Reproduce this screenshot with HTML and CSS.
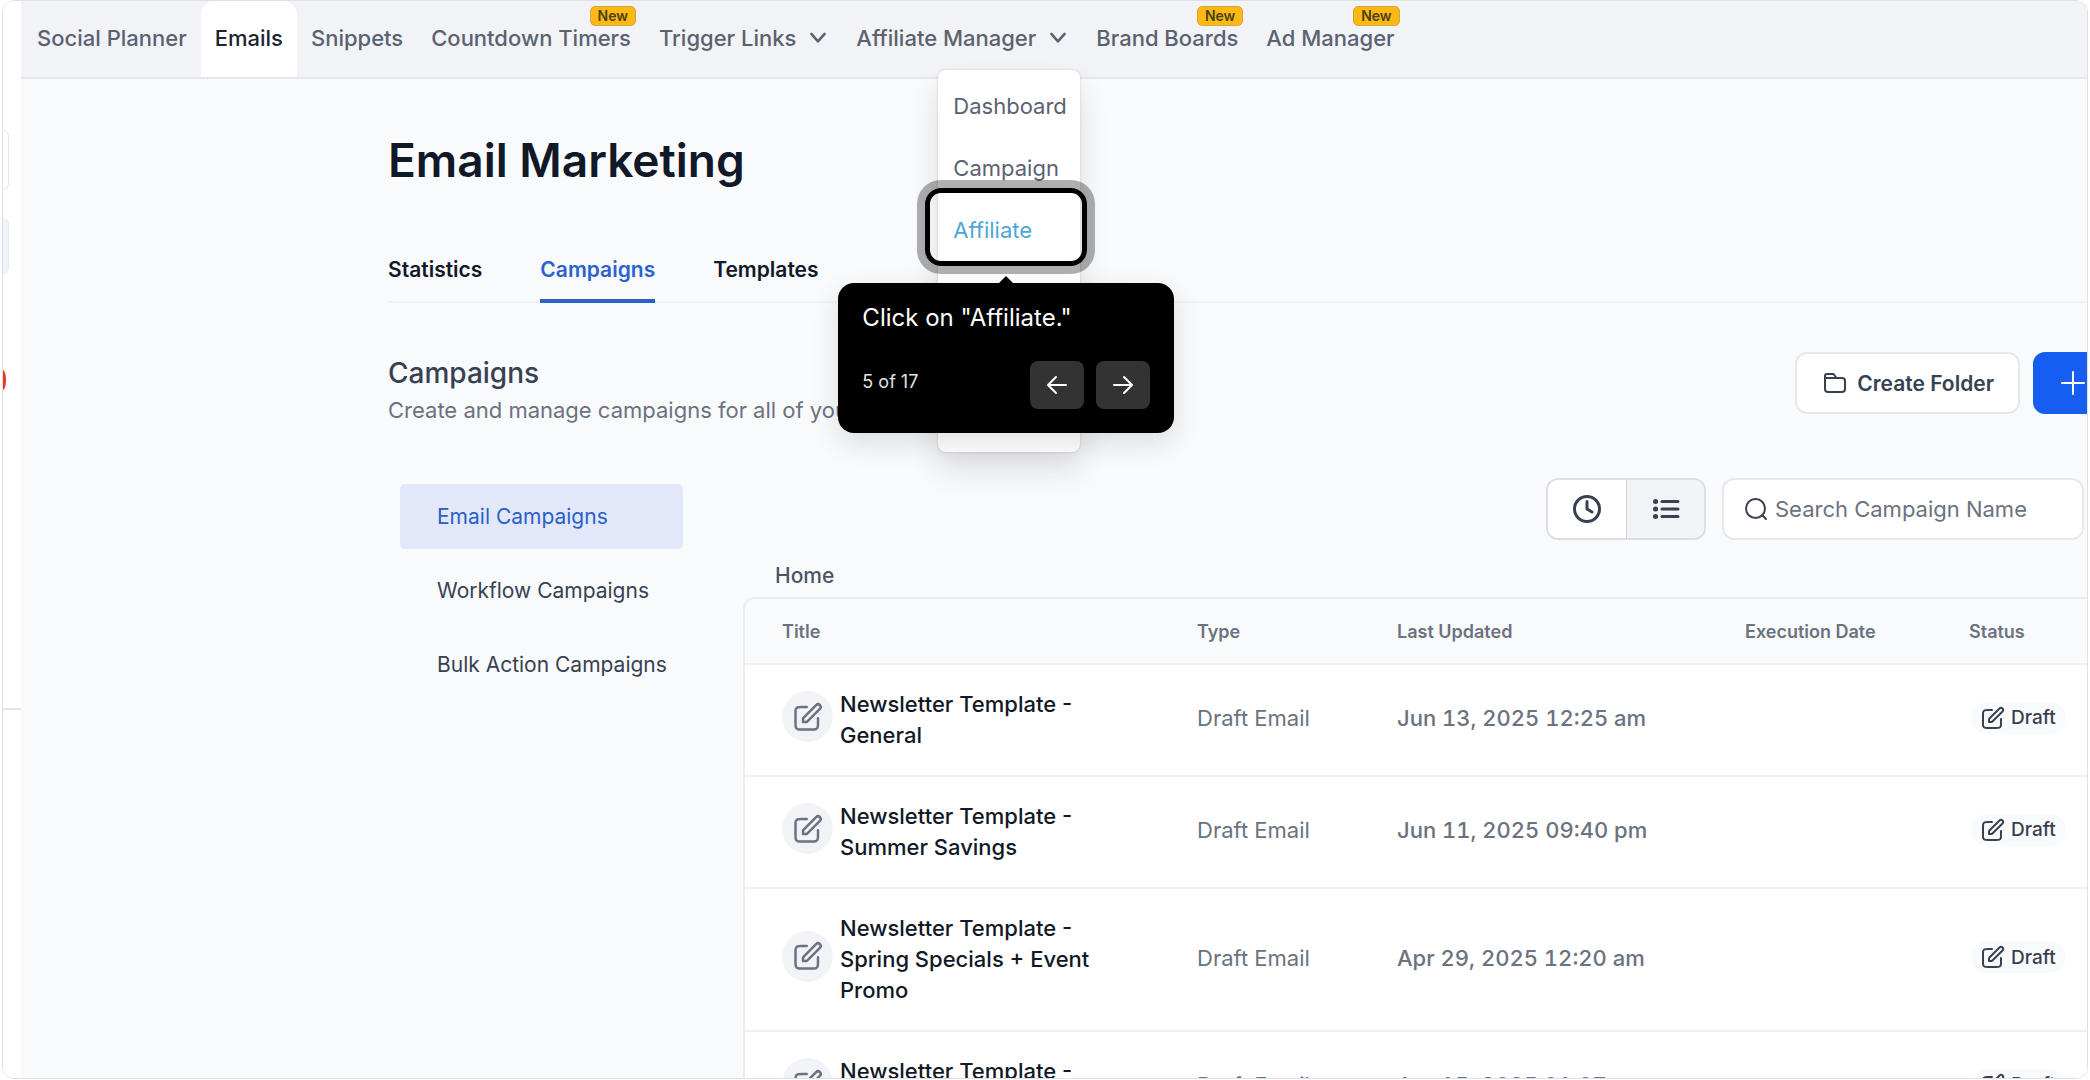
FILE: index.html
```html
<!DOCTYPE html>
<html lang="en">
<head>
<meta charset="utf-8">
<title>Email Marketing</title>
<link rel="stylesheet" href="styles.css">
</head>
<body>
<svg class="sprite" aria-hidden="true">
  <symbol id="edit" viewBox="0 0 24 24"><path d="M11 4H6.800c-1.680 0-2.520 0-3.162.327a3 3 0 0 0-1.311 1.311C2 6.280 2 7.120 2 8.800v8.400c0 1.680 0 2.520.327 3.162a3 3 0 0 0 1.311 1.311C4.280 22 5.120 22 6.800 22h8.400c1.680 0 2.520 0 3.162-.327a3 3 0 0 0 1.311-1.311C20 19.720 20 18.880 20 17.200V13M8 16h1.675c.489 0 .733 0 .964-.055.204-.050.399-.130.578-.240.201-.123.374-.296.720-.642L21.500 5.500a2.121 2.121 0 0 0-3-3l-9.563 9.563c-.346.346-.519.519-.642.720a2 2 0 0 0-.240.579c-.055.230-.055.474-.055.963V16z"/></symbol>
  <symbol id="chevron" viewBox="0 0 24 24"><path d="M4 7l8 9 8-9"/></symbol>
</svg>
<div class="frame">
  <aside class="rail" aria-label="Main menu">
    <span class="rail-box"></span>
    <span class="rail-box rail-active"></span>
    <span class="rail-dot"></span>
    <span class="rail-line"></span>
  </aside>
  <div class="page">
    <nav class="topnav" aria-label="Marketing">
      <a class="nav-item" href="#">Social Planner</a>
      <a class="nav-item current" href="#">Emails</a>
      <a class="nav-item" href="#">Snippets</a>
      <a class="nav-item" href="#">Countdown Timers<span class="badge">New</span></a>
      <a class="nav-item" href="#">Trigger Links<svg class="icon chev"><use href="#chevron"/></svg></a>
      <div class="nav-group">
        <a class="nav-item" href="#">Affiliate Manager<svg class="icon chev"><use href="#chevron"/></svg></a>
        <div class="menu">
          <a class="menu-item" href="#">Dashboard</a>
          <a class="menu-item" href="#">Campaign</a>
          <div class="step">
            <a class="menu-item picked" href="#">Affiliate</a>
            <div class="ring"></div>
            <div class="tip" role="dialog" aria-label="Walkthrough">
              <p class="tip-text">Click on "Affiliate."</p>
              <div class="tip-foot">
                <span class="tip-count">5 of 17</span>
                <button class="tip-btn" aria-label="Previous"><svg class="icon" viewBox="0 0 24 24"><path d="M21 12H4M11 4l-8 8 8 8"/></svg></button>
                <button class="tip-btn" aria-label="Next"><svg class="icon" viewBox="0 0 24 24"><path d="M3 12h17M13 4l8 8-8 8"/></svg></button>
              </div>
            </div>
          </div>
          <a class="menu-item" href="#">Payouts</a>
        </div>
      </div>
      <a class="nav-item" href="#">Brand Boards<span class="badge">New</span></a>
      <a class="nav-item" href="#">Ad Manager<span class="badge">New</span></a>
    </nav>
    <main class="main">
      <h1 class="title">Email Marketing</h1>
      <div class="tabs">
        <a class="tab" href="#">Statistics</a>
        <a class="tab active" href="#">Campaigns</a>
        <a class="tab" href="#">Templates</a>
      </div>
      <header class="section">
        <div class="section-text">
          <h2 class="subtitle">Campaigns</h2>
          <p class="lead">Create and manage campaigns for all of your</p>
        </div>
        <button class="btn"><svg class="icon" viewBox="0 0 24 24"><path d="M2 8V5a2 2 0 0 1 2-2h6.500l3 4H19a3 3 0 0 1 3 3v8a3 3 0 0 1-3 3H5a3 3 0 0 1-3-3V7h11.500"/></svg>Create Folder</button>
        <button class="btn primary" aria-label="New"><svg class="icon" viewBox="0 0 24 24"><path d="M12 1v22M1 12h22"/></svg></button>
      </header>
      <div class="body">
        <nav class="side" aria-label="Campaign types">
          <a class="side-item on" href="#">Email Campaigns</a>
          <a class="side-item" href="#">Workflow Campaigns</a>
          <a class="side-item" href="#">Bulk Action Campaigns</a>
        </nav>
        <section class="list">
          <div class="tools">
            <div class="toggle">
              <button class="toggle-btn" aria-label="Recent"><svg class="icon" viewBox="0 0 28 28"><circle cx="14" cy="14" r="12.500"/><path d="M14 6.500V14l5 3"/></svg></button>
              <button class="toggle-btn pressed" aria-label="List"><svg class="icon" viewBox="0 0 28 28"><path d="M10 6.500H26M10 14H26M10 21.500H26"/><path class="dots" d="M3.500 6.500h.1M3.500 14h.1M3.500 21.500h.1"/></svg></button>
            </div>
            <label class="search"><svg class="icon" viewBox="0 0 24 24"><circle cx="11.500" cy="11.500" r="9.500"/><path d="M18.500 18.500l3.500 3.500"/></svg><input type="text" placeholder="Search Campaign Name" aria-label="Search campaign name"></label>
          </div>
          <a class="crumb" href="#">Home</a>
          <div class="card">
            <table class="grid">
              <colgroup><col class="c-title"><col class="c-type"><col class="c-date"><col class="c-exec"><col class="c-status"></colgroup>
              <thead><tr><th>Title</th><th>Type</th><th>Last Updated</th><th>Execution Date</th><th>Status</th></tr></thead>
              <tbody>
                <tr><td><div class="name"><span class="disc"><svg class="icon"><use href="#edit"/></svg></span><span class="name-text">Newsletter Template - General</span></div></td><td class="type">Draft Email</td><td class="date">Jun 13, 2025 12:25 am</td><td></td><td class="status"><span class="pill"><svg class="icon"><use href="#edit"/></svg>Draft</span></td></tr>
                <tr><td><div class="name"><span class="disc"><svg class="icon"><use href="#edit"/></svg></span><span class="name-text">Newsletter Template - Summer Savings</span></div></td><td class="type">Draft Email</td><td class="date">Jun 11, 2025 09:40 pm</td><td></td><td class="status"><span class="pill"><svg class="icon"><use href="#edit"/></svg>Draft</span></td></tr>
                <tr><td><div class="name"><span class="disc"><svg class="icon"><use href="#edit"/></svg></span><span class="name-text">Newsletter Template - Spring Specials + Event Promo</span></div></td><td class="type">Draft Email</td><td class="date">Apr 29, 2025 12:20 am</td><td></td><td class="status"><span class="pill"><svg class="icon"><use href="#edit"/></svg>Draft</span></td></tr>
                <tr><td><div class="name"><span class="disc"><svg class="icon"><use href="#edit"/></svg></span><span class="name-text">Newsletter Template - General</span></div></td><td class="type">Draft Email</td><td class="date">Apr 15, 2025 01:07 am</td><td></td><td class="status"><span class="pill"><svg class="icon"><use href="#edit"/></svg>Draft</span></td></tr>
              </tbody>
            </table>
          </div>
        </section>
      </div>
    </main>
  </div>
</div>
</body>
</html>
```
FILE: styles.css
```css
* { box-sizing: border-box; }
body {
  margin: 0;
  padding: 0 2px 1px 2px;
  height: 100vh;
  background: #fff;
  font-family: Inter, "Liberation Sans", sans-serif;
  font-size: 22px;
  color: #111827;
}
a { color: inherit; text-decoration: none; }
button { font: inherit; cursor: pointer; }
h1, h2, p { margin: 0; }
.sprite { display: none; }
.icon {
  width: 24px; height: 24px; flex: none;
  fill: none; stroke: currentColor; stroke-width: 2;
  stroke-linecap: round; stroke-linejoin: round;
}

.frame {
  display: flex;
  height: 100%;
  border: 1px solid #dfe1e6;
  border-radius: 12px;
  overflow: hidden;
}

/* sliver of the main sidebar */
.rail { width: 18px; flex: none; display: flex; flex-direction: column; background: #fff; }
.rail-box { width: 6px; height: 60px; margin-top: 129px; border: 1px solid #e5e7eb; border-left: 0; border-radius: 0 10px 10px 0; }
.rail-active { height: 56px; margin-top: 28px; background: #eef6fc; border-color: #dfecf5; }
.rail-dot { width: 3px; height: 20px; margin-top: 96px; background: #f03325; border-radius: 0 100% 100% 0 / 0 50% 50% 0; }
.rail-line { height: 2px; margin-top: 318px; background: #e6e6e6; }

.page { flex: 1; min-width: 0; background: #f9fafc; }
.topnav {
  display: flex; height: 78px; padding-left: 2px;
  background: #f2f3f7; border-bottom: 2px solid #e4e6eb;
  color: #5a6270; font-weight: 500;
}
.nav-group { position: relative; display: flex; }
.nav-item { position: relative; display: flex; align-items: center; gap: 12px; padding: 0 14px 2px; white-space: nowrap; }
.current { background: #fff; color: #1d2433; border-radius: 14px 14px 0 0; }
.chev { width: 20px; height: 20px; stroke-width: 3; }
.badge {
  position: absolute; top: 5px; right: 9px;
  padding: 0 7px; line-height: 18px;
  font-size: 14px; font-weight: 600; color: #4a3f14;
  background: #fdb913; border: 1px solid #d8a53a; border-radius: 5px;
}

.menu {
  position: absolute; top: 69px; left: 96px; z-index: 2;
  width: 142px; height: 382px; padding-top: 5px;
  background: #fff; border-radius: 8px;
  box-shadow: 0 0 3px rgba(16,24,40,.16), 0 18px 30px rgba(16,24,40,.12);
}
.menu-item { display: flex; align-items: center; height: 62px; padding-left: 15px; font-weight: 400; }
.picked { color: #4ba7d6; }
.step { position: relative; }
.ring {
  position: absolute; top: -11px; left: -13px; width: 162px; height: 78px;
  border: 5px solid #000; border-radius: 16px; box-shadow: 0 0 0 8px rgba(0,0,0,.31);
}
.tip {
  position: absolute; top: 84px; left: -100px; width: 336px; height: 150px;
  padding: 18px 24px 24px; display: flex; flex-direction: column; justify-content: space-between;
  background: #000; color: #fff; border-radius: 16px; font-weight: 400;
  box-shadow: 0 10px 28px rgba(0,0,0,.12);
}
.tip::before {
  content: ""; position: absolute; top: -7px; left: 161px;
  border: 7px solid transparent; border-top: 0; border-bottom-color: #000;
}
.tip-text { font-size: 24px; line-height: 34px; }
.tip-foot { display: flex; gap: 12px; }
.tip-count { flex: 1; font-size: 18px; line-height: 42px; color: #e2e2e2; }
.tip-btn {
  display: flex; align-items: center; justify-content: center;
  width: 54px; height: 48px; padding: 0; border: 0; border-radius: 8px; background: #333; color: #fff;
}

.main { padding: 48px 0 0 367px; }
.title { font-size: 46px; line-height: 66px; font-weight: 600; }
.tabs { display: flex; gap: 58px; margin-top: 54px; border-bottom: 2px solid #f0f1f4; }
.tab { height: 56px; line-height: 46px; margin-bottom: -2px; font-weight: 600; border-bottom: 4px solid transparent; font-size: 21px; }
.active { color: #2b62d3; border-color: #2b62c9; }

.section { display: flex; align-items: flex-start; margin-top: 49px; }
.section-text { flex: 1; }
.subtitle { font-size: 28px; line-height: 42px; font-weight: 500; color: #374151; }
.lead { line-height: 32px; color: #6b7280; }
.btn {
  display: flex; align-items: center; gap: 10px; height: 62px; padding: 0 24px 0 26px;
  background: #fff; border: 2px solid #e6e8ec; border-radius: 12px;
  color: #374151; font-size: 21px; font-weight: 600;
}
.primary { width: 53px; margin-left: 13px; background: #155eef; border-color: #155eef; border-radius: 12px 0 0 12px; color: #fff; }

.body { display: flex; margin-top: 52px; padding-left: 12px; }
.side { width: 283px; flex: none; display: flex; flex-direction: column; gap: 9px; padding-top: 6px; }
.side-item { line-height: 65px; padding-left: 37px; border-radius: 5px; font-size: 21px; color: #374151; }
.on { background: #e2e8f9; color: #2b5fc9; }
.list { flex: 1; min-width: 0; padding-left: 60px; }
.tools { display: flex; justify-content: flex-end; gap: 16px; padding-right: 3px; }
.toggle { display: flex; border: 2px solid #dcdee3; border-radius: 12px; overflow: hidden; }
.toggle-btn { display: flex; align-items: center; justify-content: center; width: 78px; height: 58px; padding: 0; border: 0; background: #fff; color: #374151; }
.toggle-btn .icon { width: 28px; height: 28px; stroke-width: 3; }
.toggle-btn .dots { stroke-width: 5; }
.pressed { background: #f2f3f7; border-left: 1px solid #cfd2d8; }
.search { display: flex; align-items: center; gap: 7px; width: 362px; height: 62px; padding: 0 20px; background: #fff; border: 2px solid #e6e8ec; border-radius: 12px; color: #374151; }
.search input { flex: 1; min-width: 0; padding: 0; border: 0; outline: 0; background: none; font: inherit; color: inherit; }
.search input::placeholder { color: #6b7280; opacity: 1; }
.crumb { display: block; padding-left: 32px; margin-top: 20px; line-height: 32px; font-weight: 500; font-size: 21px; color: #4b5563; }
.card { margin-top: 5px; background: #fff; border: 2px solid #eaecf0; border-right: 0; border-radius: 12px 0 0 0; overflow: hidden; }
.grid { width: 100%; table-layout: fixed; border-collapse: collapse; }
.c-title { width: 415px; }
.c-type { width: 200px; }
.c-date { width: 348px; }
.c-exec { width: 224px; }
th { height: 65px; padding: 0 0 0 37px; background: #f9fafc; text-align: left; font-size: 18px; font-weight: 600; color: #6b7280; }
td { padding: 24px 0 24px 37px; border-top: 2px solid #eff0f3; vertical-align: middle; white-space: nowrap; }
.name { display: flex; align-items: center; gap: 7px; }
.name-text { width: 260px; line-height: 31px; font-weight: 500; white-space: normal; }
.disc { display: flex; align-items: center; justify-content: center; width: 51px; height: 51px; margin-bottom: 7px; border-radius: 50%; background: #f2f3f7; color: #6b7280; }
.disc .icon { width: 30px; height: 30px; }
.type, .date, .status { padding-bottom: 28px; }
.type { color: #6b7280; font-weight: 400; }
.date { color: #6b7280; font-weight: 500; font-variant-numeric: tabular-nums; }
.pill { display: inline-flex; align-items: center; gap: 6px; height: 32px; margin-left: 2px; padding: 0 10px; border-radius: 16px; background: #f9fafc; color: #374151; font-size: 19px; font-weight: 500; }
```
